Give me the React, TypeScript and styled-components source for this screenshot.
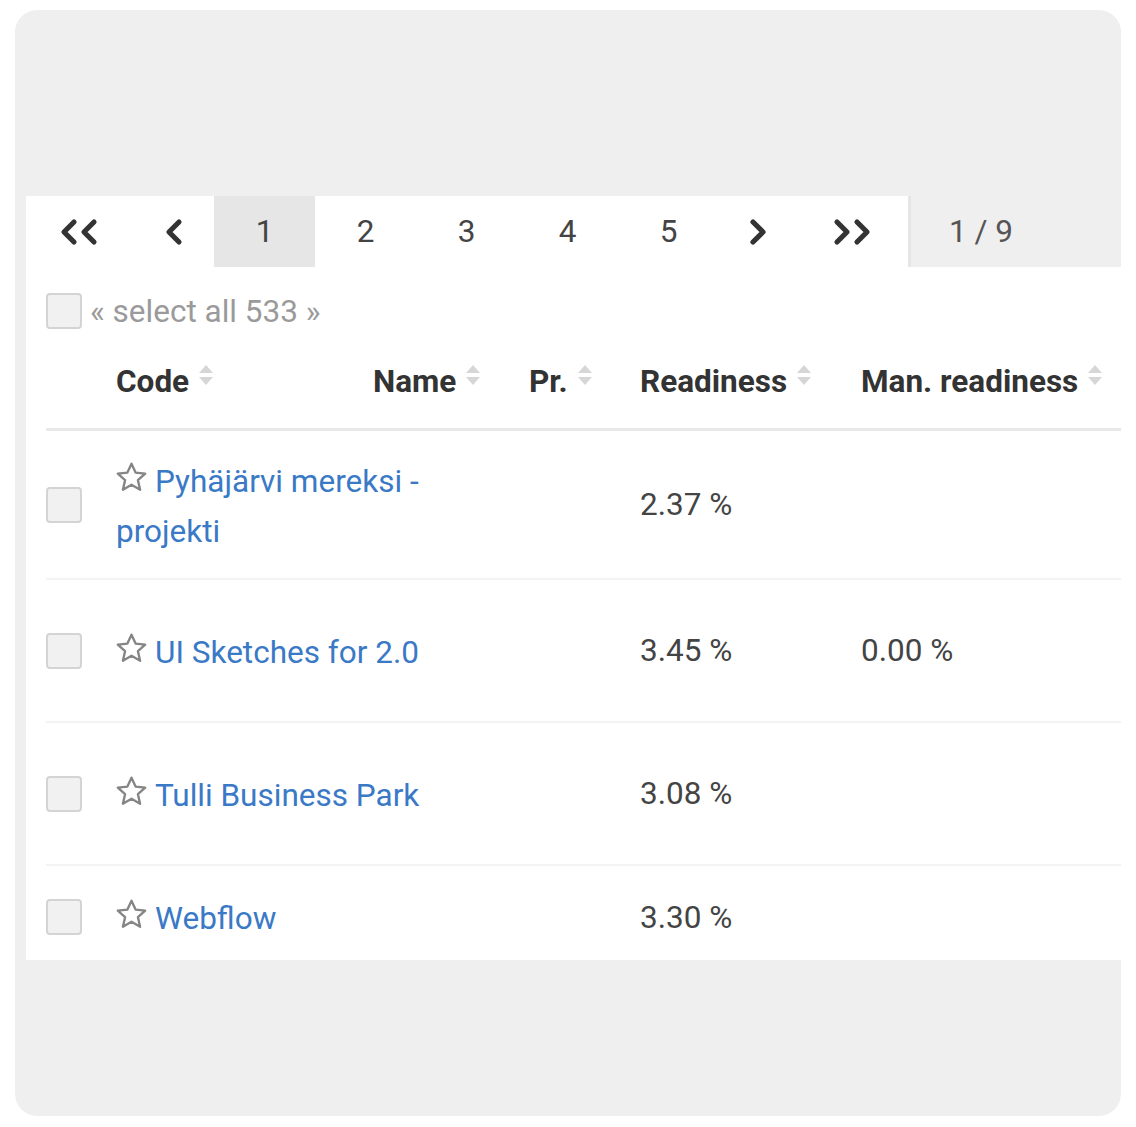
import React from "react";
import styled, { createGlobalStyle } from "styled-components";

const Global = createGlobalStyle`
  html, body { margin: 0; padding: 0; background: #ffffff; }
  body { font-family: Roboto, "Liberation Sans", Arial, sans-serif; }
  * { box-sizing: border-box; }
`;

const FS = "31.5px";

const Card = styled.div`
  margin: 10px 15px;
  width: 1106px;
  height: 1106px;
  background: #efefef;
  border-radius: 22px;
  padding: 186px 0 0 11px;
`;

const Panel = styled.div`
  background: #ffffff;
  height: 764px;
  overflow: hidden;
`;

const Pager = styled.div`
  display: flex;
  height: 71px;
`;

const PageCell = styled.div<{ $w: number; $active?: boolean }>`
  width: ${(p) => p.$w}px;
  display: flex;
  align-items: center;
  justify-content: center;
  background: ${(p) => (p.$active ? "#e6e6e6" : "#ffffff")};
  color: #444;
  font-size: ${FS};
`;

const PageInfo = styled.div`
  flex: 1;
  display: flex;
  align-items: center;
  padding-left: 38px;
  background: #efefef;
  border-left: 3px solid #e6e6e6;
  color: #555;
  font-size: ${FS};
`;

const Body = styled.div`
  padding-left: 20px;
`;

const SelectAll = styled.div`
  height: 88px;
  display: flex;
  align-items: center;
  gap: 8px;
  color: #9a9a9a;
  font-size: ${FS};
`;

const Check = styled.span`
  display: inline-block;
  width: 36px;
  height: 36px;
  border: 2px solid #d4d4d4;
  border-radius: 4px;
  background: #f1f1f1;
  flex: none;
`;

const grid = `
  display: grid;
  grid-template-columns: 70px 257px 156px 111px 221px 1fr;
  align-items: center;
`;

const HeaderRow = styled.div`
  ${grid}
  height: 76px;
  padding-bottom: 21px;
  border-bottom: 3px solid #e9e9e9;
`;

const HeadCell = styled.div<{ $col: number }>`
  grid-column: ${(p) => p.$col};
  display: flex;
  align-items: center;
  gap: 8px;
  font-weight: 700;
  font-size: ${FS};
  color: #333;
  white-space: nowrap;
`;

const SortIcon = styled.svg`
  width: 18px;
  height: 28px;
  margin-top: -10px;
  flex: none;
`;

const Row = styled.div<{ $h: number; $last?: boolean }>`
  ${grid}
  min-height: ${(p) => p.$h}px;
  border-bottom: ${(p) => (p.$last ? "none" : "2px solid #f3f3f3")};
`;

const TitleCell = styled.div`
  grid-column: 2 / 5;
  max-width: 345px;
  line-height: 50px;
  font-size: ${FS};
  padding-top: 4px;
`;

const Link = styled.a`
  color: #3a79c6;
  text-decoration: none;
`;

const StarIcon = styled.svg`
  width: 35px;
  height: 35px;
  vertical-align: -3px;
  margin-right: 6px;
  margin-left: -2px;
`;

const Value = styled.div<{ $col: number }>`
  grid-column: ${(p) => p.$col};
  font-size: ${FS};
  color: #444;
`;

const Chevron = ({ double, dir }: { double?: boolean; dir: "l" | "r" }) => {
  const w = double ? 44 : 22;
  const one = (x: number) =>
    dir === "l"
      ? `M${x + 15} 4 L${x + 5} 14 L${x + 15} 24`
      : `M${x + 6} 4 L${x + 16} 14 L${x + 6} 24`;
  return (
    <svg width={w} height={28} viewBox={`0 0 ${w} 28`}>
      <path d={one(0)} fill="none" stroke="#333" strokeWidth={5.2} strokeLinecap="round" strokeLinejoin="round" />
      {double && (
        <path d={one(20)} fill="none" stroke="#333" strokeWidth={5.2} strokeLinecap="round" strokeLinejoin="round" />
      )}
    </svg>
  );
};

const Sort = () => (
  <SortIcon viewBox="0 0 18 28">
    <path d="M9 3 L16 11 L2 11 Z" fill="#d6d6d6" />
    <path d="M2 15 L16 15 L9 23 Z" fill="#d6d6d6" />
  </SortIcon>
);

const Star = () => (
  <StarIcon viewBox="0 0 24 24">
    <path
      d="M12 2.5 L14.8 8.6 L21.4 9.3 L16.4 13.8 L17.9 20.4 L12 17 L6.1 20.4 L7.6 13.8 L2.6 9.3 L9.2 8.6 Z"
      fill="none"
      stroke="#858585"
      strokeWidth={1.6}
      strokeLinejoin="round"
    />
  </StarIcon>
);

const rows = [
  { title: "Pyhäjärvi mereksi - projekti", r: "2.37 %", m: "", h: 149 },
  { title: "UI Sketches for 2.0", r: "3.45 %", m: "0.00 %", h: 143 },
  { title: "Tulli Business Park", r: "3.08 %", m: "", h: 143 },
  { title: "Webflow", r: "3.30 %", m: "", h: 102 },
];

const headers = [
  { label: "Code", col: 2 },
  { label: "Name", col: 3 },
  { label: "Pr.", col: 4 },
  { label: "Readiness", col: 5 },
  { label: "Man. readiness", col: 6 },
];

export default function App() {
  return (
    <>
      <Global />
      <Card>
        <Panel>
          <Pager>
            <PageCell $w={110}>
              <Chevron double dir="l" />
            </PageCell>
            <PageCell $w={78}>
              <Chevron dir="l" />
            </PageCell>
            {[1, 2, 3, 4, 5].map((n) => (
              <PageCell key={n} $w={101} $active={n === 1}>
                {n}
              </PageCell>
            ))}
            <PageCell $w={78}>
              <Chevron dir="r" />
            </PageCell>
            <PageCell $w={111}>
              <Chevron double dir="r" />
            </PageCell>
            <PageInfo>1 / 9</PageInfo>
          </Pager>
          <Body>
            <SelectAll>
              <Check />
              <span>« select all 533 »</span>
            </SelectAll>
            <HeaderRow>
              {headers.map((h) => (
                <HeadCell key={h.label} $col={h.col}>
                  {h.label}
                  <Sort />
                </HeadCell>
              ))}
            </HeaderRow>
            {rows.map((r, i) => (
              <Row key={r.title} $h={r.h} $last={i === rows.length - 1}>
                <Check />
                <TitleCell>
                  <Star />
                  <Link href="#">{r.title}</Link>
                </TitleCell>
                <Value $col={5}>{r.r}</Value>
                <Value $col={6}>{r.m}</Value>
              </Row>
            ))}
          </Body>
        </Panel>
      </Card>
    </>
  );
}
